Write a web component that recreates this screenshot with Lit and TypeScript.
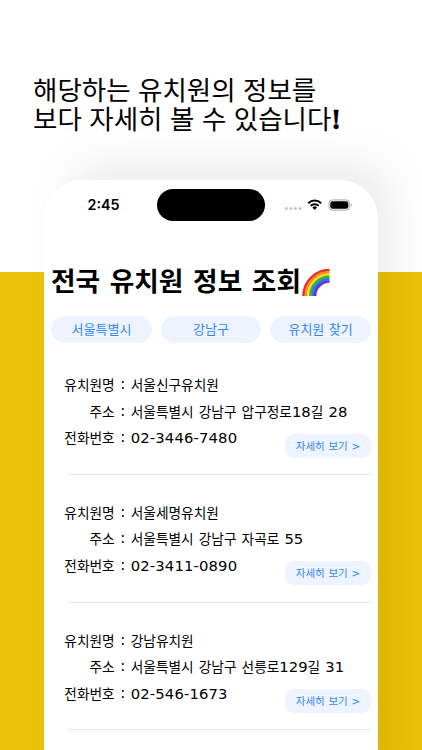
import { LitElement, html, css, svg } from "lit";
import { customElement } from "lit/decorators.js";

interface Kindergarten {
  name: string;
  address: string;
  phone: string;
}

const KINDERGARTENS: Kindergarten[] = [
  { name: "서울신구유치원", address: "서울특별시 강남구 압구정로18길 28", phone: "02-3446-7480" },
  { name: "서울세명유치원", address: "서울특별시 강남구 자곡로 55", phone: "02-3411-0890" },
  { name: "강남유치원", address: "서울특별시 강남구 선릉로129길 31", phone: "02-546-1673" },
];

const RAINBOW = ["#e8302b", "#f98a1c", "#fbdd25", "#35b13f", "#2677e4", "#6232d0"];

// Digits and punctuation are set in a wider face than the Hangul around them.
const mixed = (text: string) =>
  text
    .split(/([0-9\-]+)/)
    .filter((run) => run !== "")
    .map((run) => (/^[0-9\-]/.test(run) ? html`<span class="num">${run}</span>` : run));

@customElement("app-root")
export class AppRoot extends LitElement {
  static styles = css`
    :host {
      display: block;
      width: 422px;
      height: 750px;
      overflow: hidden;
      box-sizing: border-box;
      background: linear-gradient(#fff 272px, #eac206 272px);
      color: #000;
      font-family: "Noto Sans CJK KR", sans-serif;
    }
    .headline {
      margin: 0;
      padding: 74px 0 0 33px;
      height: 106px;
      box-sizing: content-box;
      font-size: 26.5px;
      font-weight: 400;
      line-height: 29px;
      word-spacing: 1.6px;
      white-space: nowrap;
    }
    .bang {
      font-family: "Liberation Serif", serif;
      font-weight: 700;
      font-size: 29px;
      line-height: 1px;
      -webkit-text-stroke: 0.5px #000;
    }
    .phone {
      box-sizing: border-box;
      width: 334px;
      height: 640px;
      margin-left: 44px;
      padding: 9px 7px 0;
      border-radius: 38px 38px 0 0;
      background: #fff;
      box-shadow: 20px -24px 46px -6px rgba(0, 0, 0, 0.08);
    }
    .status {
      display: grid;
      grid-template-columns: 106px 108px 1fr;
      height: 32px;
      align-items: center;
    }
    .time {
      padding-left: 36.5px;
      font: 600 14.3px/32px Inter, sans-serif;
    }
    .island {
      height: 32px;
      border-radius: 16px;
      background: #000;
    }
    .signals {
      display: block;
      margin-left: 20px;
    }
    .title {
      display: flex;
      margin: 40px 0 0;
      height: 39px;
      font-size: 26.7px;
      font-weight: 700;
      line-height: 38px;
      word-spacing: 3.6px;
      white-space: nowrap;
    }
    .rainbow {
      display: block;
      margin: 7px 0 0 0.8px;
    }
    .filters {
      display: grid;
      grid-template-columns: repeat(3, 1fr);
      gap: 8.6px;
      width: 320px;
      margin-top: 15.5px;
    }
    button {
      display: block;
      border: 0;
      padding: 0;
      background: #edf4ff;
      color: #3287f3;
      font-family: inherit;
      white-space: nowrap;
    }
    .filter {
      height: 27.5px;
      border-radius: 14px;
      font-size: 13px;
      line-height: 26px;
      padding-bottom: 1.5px;
      word-spacing: 1.5px;
    }
    .list {
      padding-top: 28.5px;
    }
    .item {
      display: flow-root;
      position: relative;
      box-sizing: border-box;
      width: 303px;
      height: 127.8px;
      margin-left: 17px;
    }
    .item::after {
      content: "";
      position: absolute;
      left: 0;
      right: 0;
      top: 102.4px;
      height: 1px;
      background: #e8e8e8;
    }
    .facts {
      display: grid;
      grid-template-columns: 51px 16px 1fr;
      grid-auto-rows: 26.7px;
      margin: -0.6px 0 0 -4.3px;
      font-size: 13.7px;
      line-height: 26.7px;
      word-spacing: 2px;
      white-space: nowrap;
    }
    .label {
      display: flex;
      justify-content: flex-end;
    }
    .colon {
      text-align: center;
      font-family: "DejaVu Sans", sans-serif;
      font-size: 15px;
    }
    .num {
      font-family: "DejaVu Sans", sans-serif;
      font-size: 14.8px;
      line-height: 1px;
    }
    .phone-no .num {
      letter-spacing: 0.14px;
    }
    .more {
      position: absolute;
      right: 0;
      top: 62px;
      width: 86px;
      height: 24px;
      border-radius: 9px;
      font-size: 10.5px;
      line-height: 24px;
      word-spacing: 1.3px;
    }
    .arrow {
      font-family: "DejaVu Sans", sans-serif;
      font-size: 10.5px;
      line-height: 1px;
    }
  `;

  private rainbow() {
    return svg`<svg class="rainbow" width="28" height="29" viewBox="0 0 28 29" fill="none">
      ${RAINBOW.map((color, i) => {
        const r = 26 - i * 2.3;
        return svg`<path d="M${27.5 - r} 28A${r} ${r} 0 0 1 27.5 ${28 - r}" stroke=${color} stroke-width="2.6" />`;
      })}
    </svg>`;
  }

  private signals() {
    return svg`<svg class="signals" width="70" height="14" viewBox="0 0 70 14" fill="none">
      <g fill="#c4c4c4">
        <circle cx="1.4" cy="10.4" r="1.5" /><circle cx="6" cy="10.4" r="1.5" />
        <circle cx="10.5" cy="10.4" r="1.5" /><circle cx="15" cy="10.4" r="1.5" />
      </g>
      <g stroke="#000" stroke-width="2">
        <path d="M23.3 5.2a9.1 9.1 0 0 1 12.8 0" />
        <path d="M25.7 7.8a5.7 5.7 0 0 1 8 0" />
      </g>
      <path d="M27.4 9.4a3.4 3.4 0 0 1 4.6 0L29.7 11.9Z" fill="#000" />
      <rect x="44" y="1.9" width="20.6" height="10.2" rx="3.3" stroke="#a8a8a8" />
      <rect x="45.3" y="3.2" width="18" height="7.6" rx="2.2" fill="#000" />
      <path d="M65.8 5.4q1.2.5 1.2 1.6t-1.2 1.6Z" fill="#a8a8a8" />
    </svg>`;
  }

  render() {
    return html`
      <h1 class="headline">
        해당하는 유치원의 정보를<br />보다 자세히 볼 수 있습니다<span class="bang">!</span>
      </h1>
      <main class="phone">
        <div class="status">
          <span class="time">2:45</span>
          <span class="island"></span>
          ${this.signals()}
        </div>
        <h2 class="title">전국 유치원 정보 조회${this.rainbow()}</h2>
        <div class="filters">
          <button class="filter">서울특별시</button>
          <button class="filter">강남구</button>
          <button class="filter">유치원 찾기</button>
        </div>
        <div class="list">
          ${KINDERGARTENS.map(
            (k) => html`<section class="item">
              <div class="facts">
                <span class="label">유치원명</span><span class="colon">:</span><span>${mixed(k.name)}</span>
                <span class="label">주소</span><span class="colon">:</span><span>${mixed(k.address)}</span>
                <span class="label">전화번호</span><span class="colon">:</span
                ><span class="phone-no">${mixed(k.phone)}</span>
              </div>
              <button class="more">자세히 보기 <span class="arrow">&gt;</span></button>
            </section>`
          )}
        </div>
      </main>
    `;
  }
}
